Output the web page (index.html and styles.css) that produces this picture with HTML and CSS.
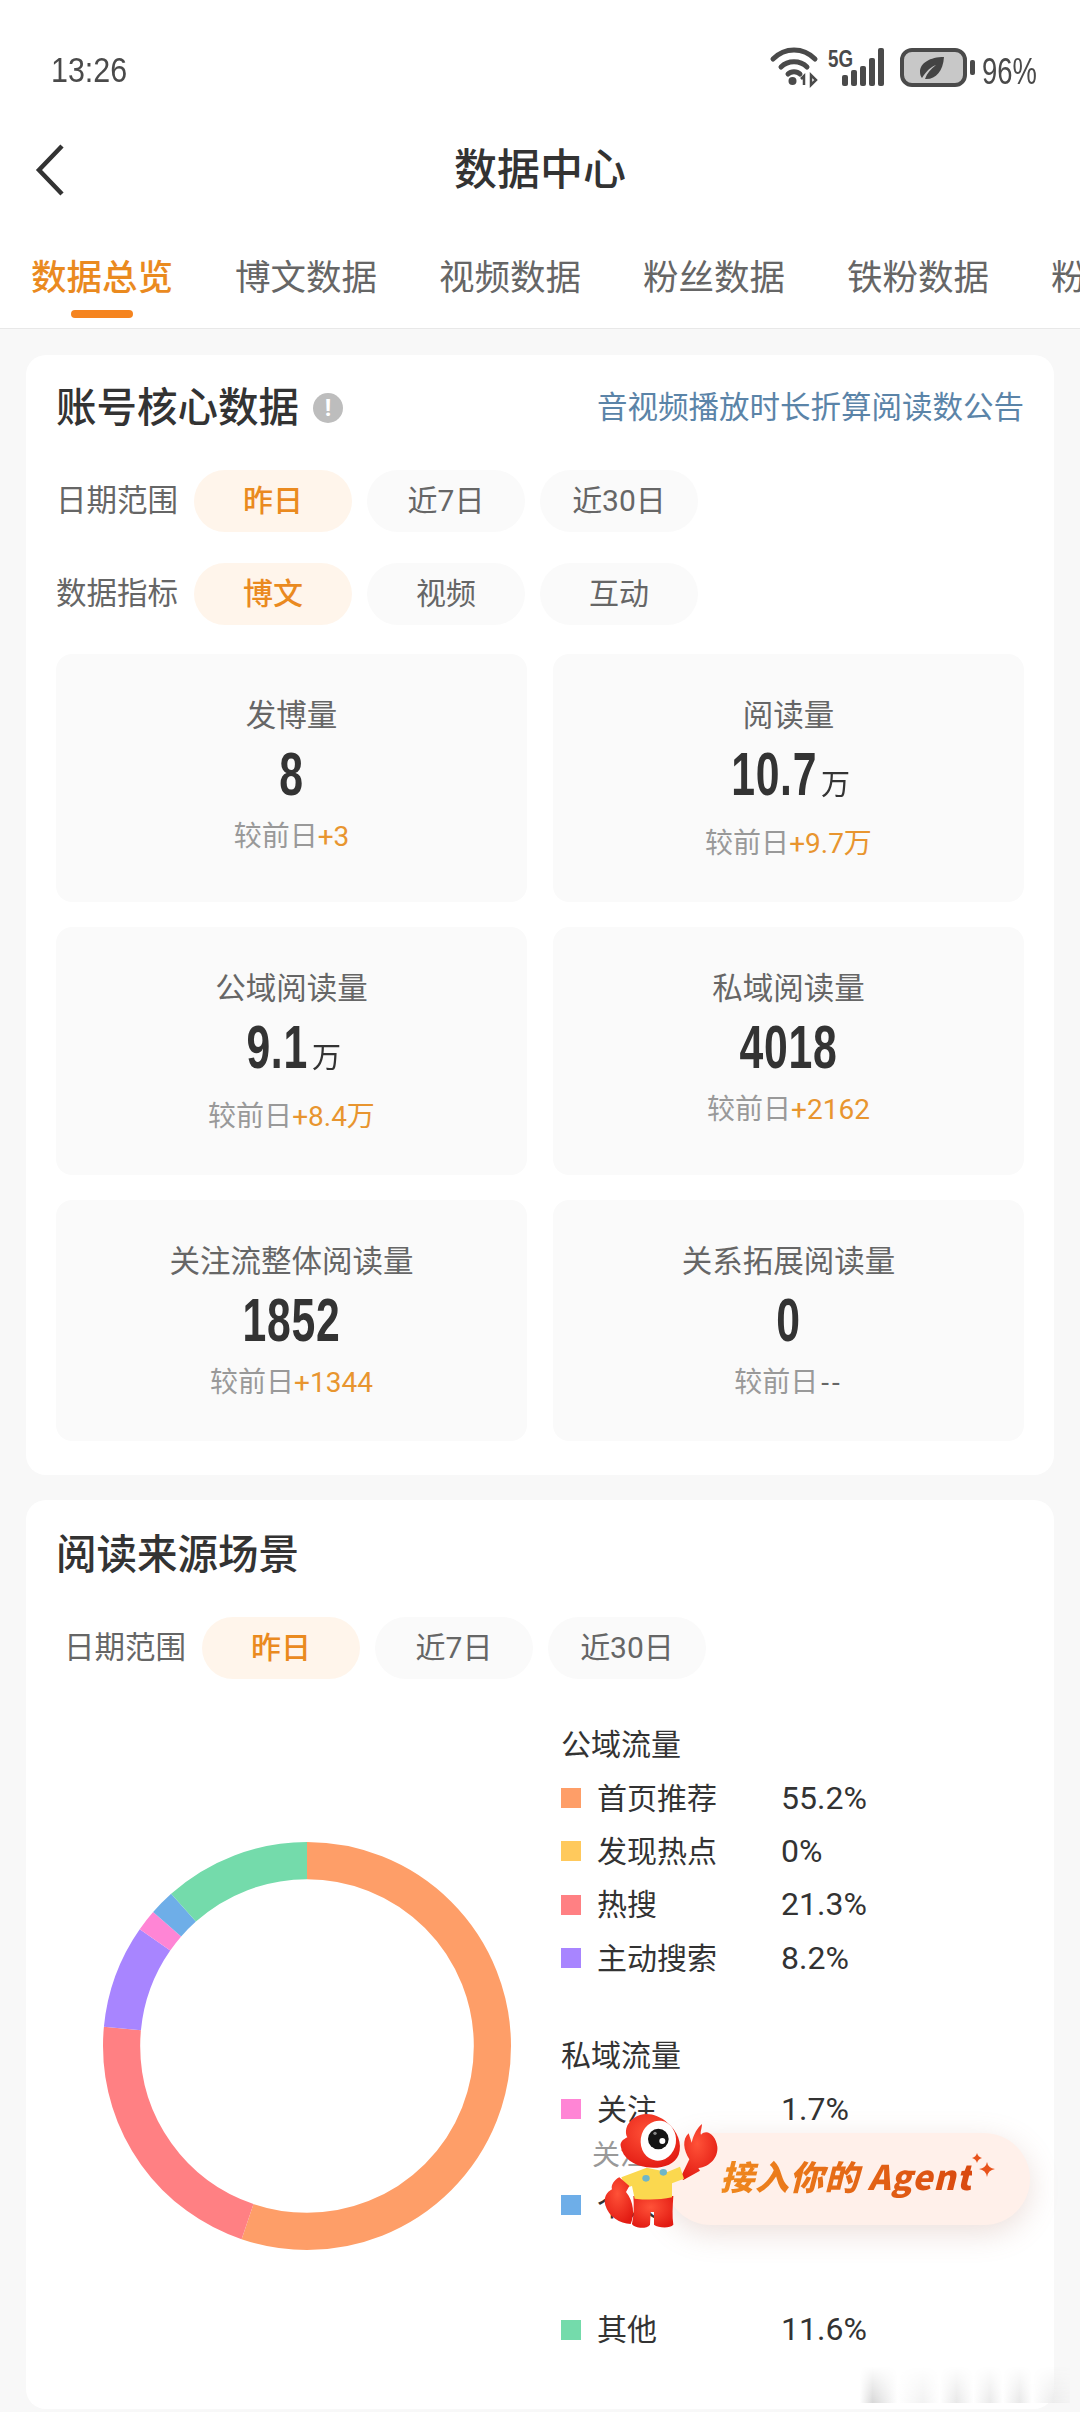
FILE: index.html
```html
<!DOCTYPE html>
<html lang="zh-CN">
<head>
    <meta charset="UTF-8">
    <meta name="viewport" content="width=device-width, initial-scale=1.0">
    <title>数据中心</title>
    <link rel="stylesheet" href="styles.css">
</head>
<body>
<div class="page">
    <div class="status-bar">
        <span class="status-time">13:26</span>
        <div class="status-right">
            <svg class="status-icons" width="206" height="40" viewBox="0 0 206 40">
                <!-- wifi -->
                <g fill="none" stroke="#4a4a4a" stroke-width="5" stroke-linecap="round">
                    <path d="M3 11 C15 -1 33 -1 45 11"/>
                    <path d="M11 19 C18 12 30 12 37 19"/>
                    <path d="M18 26 C21 23 27 23 30 26"/>
                </g>
                <circle cx="22.500" cy="33" r="4" fill="#4a4a4a"/>
                <path d="M34 37 L34 28 L31 31 M41 27 L41 37 L46 32 Z" fill="none" stroke="#4a4a4a" stroke-width="2.500"/>
                <!-- 5G + signal -->
                <text x="58" y="19" class="status-5g" textLength="25" lengthAdjust="spacingAndGlyphs">5G</text>
                <g fill="#4a4a4a">
                    <rect x="72" y="27" width="6" height="11" rx="2"/>
                    <rect x="81" y="22" width="6" height="16" rx="2"/>
                    <rect x="90" y="18" width="6" height="20" rx="2"/>
                    <rect x="99" y="10" width="6" height="28" rx="2"/>
                    <rect x="108" y="0" width="6" height="38" rx="2"/>
                </g>
                <!-- battery -->
                <rect x="132" y="2" width="63" height="35" rx="10" fill="#c8c8c8" stroke="#4a4a4a" stroke-width="4"/>
                <rect x="200" y="12" width="5" height="15" rx="2" fill="#4a4a4a"/>
                <path d="M174 9 C160 9 150 15 150 24 C150 27 151 29 152 30 C157 22 161 19 166 17 C161 21 157 25 155 31 C165 32 173 24 174 9 Z" fill="#444"/>
            </svg>
            <span class="status-pct">96%</span>
        </div>
    </div>

    <div class="top-bar">
        <svg class="back-icon" width="30" height="52" viewBox="0 0 30 52">
            <path d="M27 2 L4 26 L27 50" fill="none" stroke="#333" stroke-width="4.500"/>
        </svg>
        <h1 class="top-title">数据中心</h1>
    </div>

    <div class="tabs">
        <div class="tab tab-on">数据总览</div>
        <div class="tab">博文数据</div>
        <div class="tab">视频数据</div>
        <div class="tab">粉丝数据</div>
        <div class="tab">铁粉数据</div>
        <div class="tab">粉丝数据</div>
    </div>

    <section class="card card-core">
        <div class="card-head">
            <h2 class="card-title">账号核心数据</h2>
            <span class="info-dot">!</span>
            <a class="card-link">音视频播放时长折算阅读数公告</a>
        </div>
        <div class="filter">
            <span class="filter-label">日期范围</span>
            <span class="chip chip-on">昨日</span>
            <span class="chip">近7日</span>
            <span class="chip">近30日</span>
        </div>
        <div class="filter filter-second">
            <span class="filter-label">数据指标</span>
            <span class="chip chip-on">博文</span>
            <span class="chip">视频</span>
            <span class="chip">互动</span>
        </div>
        <div class="tiles">
            <div class="tile">
                <p class="tile-label">发博量</p>
                <p class="tile-num">8</p>
                <p class="tile-sub">较前日<span class="up">+3</span></p>
            </div>
            <div class="tile">
                <p class="tile-label">阅读量</p>
                <p class="tile-num has-unit">10.7<span class="unit">万</span></p>
                <p class="tile-sub">较前日<span class="up">+9.7万</span></p>
            </div>
            <div class="tile">
                <p class="tile-label">公域阅读量</p>
                <p class="tile-num has-unit">9.1<span class="unit">万</span></p>
                <p class="tile-sub">较前日<span class="up">+8.4万</span></p>
            </div>
            <div class="tile">
                <p class="tile-label">私域阅读量</p>
                <p class="tile-num">4018</p>
                <p class="tile-sub">较前日<span class="up">+2162</span></p>
            </div>
            <div class="tile">
                <p class="tile-label">关注流整体阅读量</p>
                <p class="tile-num">1852</p>
                <p class="tile-sub">较前日<span class="up">+1344</span></p>
            </div>
            <div class="tile">
                <p class="tile-label">关系拓展阅读量</p>
                <p class="tile-num">0</p>
                <p class="tile-sub">较前日<span class="none">--</span></p>
            </div>
        </div>
    </section>

    <section class="card card-source">
        <div class="card-head">
            <h2 class="card-title">阅读来源场景</h2>
        </div>
        <div class="filter filter-inset">
            <span class="filter-label">日期范围</span>
            <span class="chip chip-on">昨日</span>
            <span class="chip">近7日</span>
            <span class="chip">近30日</span>
        </div>
        <div class="source-body">
            <svg class="donut" width="408" height="408" viewBox="0 0 406 406">
                <g fill="none" stroke-width="37" transform="rotate(-90 203 203)">
                    <circle cx="203" cy="203" r="184.500" pathLength="100" stroke="#fe9e68" stroke-dasharray="55.200 44.800"/>
                    <circle cx="203" cy="203" r="184.500" pathLength="100" stroke="#ff8083" stroke-dasharray="21.300 78.700" stroke-dashoffset="-55.200"/>
                    <circle cx="203" cy="203" r="184.500" pathLength="100" stroke="#a885ff" stroke-dasharray="8.200 91.800" stroke-dashoffset="-76.500"/>
                    <circle cx="203" cy="203" r="184.500" pathLength="100" stroke="#ff85d5" stroke-dasharray="1.700 98.300" stroke-dashoffset="-84.700"/>
                    <circle cx="203" cy="203" r="184.500" pathLength="100" stroke="#6eaee8" stroke-dasharray="2 98" stroke-dashoffset="-86.400"/>
                    <circle cx="203" cy="203" r="184.500" pathLength="100" stroke="#74dbab" stroke-dasharray="11.600 88.400" stroke-dashoffset="-88.400"/>
                </g>
            </svg>
            <div class="legend">
                <div class="legend-head">公域流量</div>
                <div class="legend-row"><i class="swatch sw-orange"></i><span class="legend-name">首页推荐</span><span class="legend-val">55.2%</span></div>
                <div class="legend-row"><i class="swatch sw-yellow"></i><span class="legend-name">发现热点</span><span class="legend-val">0%</span></div>
                <div class="legend-row"><i class="swatch sw-red"></i><span class="legend-name">热搜</span><span class="legend-val">21.3%</span></div>
                <div class="legend-row"><i class="swatch sw-purple"></i><span class="legend-name">主动搜索</span><span class="legend-val">8.2%</span></div>

                <div class="legend-head legend-head-second">私域流量</div>
                <div class="legend-row"><i class="swatch sw-pink"></i><span class="legend-name">关注</span><span class="legend-val">1.7%</span></div>
                <div class="legend-note">关注</div>
                <div class="legend-row legend-row-gap"><i class="swatch sw-blue"></i><span class="legend-name">个人</span></div>
                <div class="legend-row"><i class="swatch sw-green"></i><span class="legend-name">其他</span><span class="legend-val">11.6%</span></div>
            </div>
        </div>
    </section>

    <div class="watermark"></div>

    <div class="agent">
        <span class="agent-text">接入你的 Agent</span>
        <svg class="agent-spark" width="26" height="36" viewBox="0 0 26 36">
            <path d="M6 0 Q7 4 11 5 Q7 6 6 10 Q5 6 1 5 Q5 4 6 0 Z" fill="#e8531c"/>
            <path d="M16 9 Q17 15 24 16 Q17 17 16 24 Q15 17 8 16 Q15 15 16 9 Z" fill="#e8531c"/>
        </svg>
        <svg class="agent-crab" width="140" height="140" viewBox="0 0 420 420">
            <defs>
                <radialGradient id="crabRed" cx="45%" cy="35%" r="70%">
                    <stop offset="0" stop-color="#ff5238"/>
                    <stop offset="1" stop-color="#e21a12"/>
                </radialGradient>
            </defs>
            <!-- raised claw -->
            <path d="M272 232 L298 178 C280 150 276 118 296 100 L305 128 C312 100 322 84 336 72 C335 88 330 98 333 104 C352 84 378 108 382 140 C385 172 360 200 325 204 L330 212 L280 240 Z" fill="url(#crabRed)"/>
            <!-- legs -->
            <path d="M130 288 L250 288 C248 320 246 350 250 374 C240 386 205 384 192 374 L192 336 L182 336 L180 374 C170 388 135 386 126 372 C132 345 132 315 130 288 Z" fill="url(#crabRed)"/>
            <!-- shirt -->
            <path d="M94 232 L170 203 L232 216 L270 200 L282 236 L246 250 L246 292 C210 300 170 300 134 296 L126 258 L106 264 Z" fill="#fbd84f"/>
            <ellipse cx="168" cy="235" rx="11" ry="10" fill="#6fb6c8"/>
            <ellipse cx="220" cy="217" rx="11" ry="10" fill="#6fb6c8"/>
            <!-- low claw -->
            <path d="M88 232 L118 258 L108 276 C132 305 134 345 122 372 C90 372 56 350 46 316 C40 292 50 276 66 268 C62 256 72 240 88 232 Z" fill="url(#crabRed)"/>
            <!-- head -->
            <path d="M132 54 C160 34 200 40 232 68 C262 92 278 130 266 164 C254 196 210 208 170 202 C132 196 98 176 92 138 C90 126 100 118 112 112 C104 98 106 72 132 54 Z" fill="url(#crabRed)"/>
            <ellipse cx="205" cy="122" rx="53" ry="60" fill="#fff" transform="rotate(8 205 122)"/>
            <circle cx="205" cy="117" r="31" fill="#151515"/>
            <circle cx="217" cy="123" r="9" fill="#fff"/>
            <circle cx="195" cy="100" r="5" fill="#888"/>
        </svg>
    </div>
</div>
</body>
</html>
```

FILE: styles.css
```css
* {
    box-sizing: border-box;
}
body {
    margin: 0;
    background-color: #f8f8f8;
    font-family: Roboto, "Noto Sans CJK SC", sans-serif;
    color: #333;
}
p, h1, h2 {
    margin: 0;
    font-weight: normal;
}
.page {
    position: relative;
    width: 1080px;
    height: 2412px;
    overflow: hidden;
}

/* status bar */
.status-bar {
    height: 110px;
    background-color: #fff;
    display: flex;
    justify-content: space-between;
    padding: 48px 44px 0 51px;
    color: #4a4a4a;
}
.status-time {
    display: inline-block;
    height: 44px;
    font-family: "Liberation Sans", sans-serif;
    font-size: 35px;
    line-height: 44px;
    transform: scaleX(0.87);
    transform-origin: left center;
}
.status-right {
    display: flex;
    align-items: flex-start;
}
.status-icons {
    overflow: visible;
}
.status-5g {
    font-family: "Liberation Sans", sans-serif;
    font-size: 24px;
    font-weight: bold;
    fill: #4a4a4a;
}
.status-pct {
    display: inline-block;
    width: 54px;
    height: 44px;
    margin-left: 6px;
    font-family: "Liberation Sans", sans-serif;
    font-size: 37px;
    line-height: 48px;
    white-space: nowrap;
    transform: scaleX(0.74);
    transform-origin: left center;
}

/* header */
.top-bar {
    position: relative;
    height: 120px;
    background-color: #fff;
    display: flex;
    align-items: center;
    justify-content: center;
}
.back-icon {
    position: absolute;
    left: 35px;
    top: 34px;
}
.top-title {
    font-size: 43px;
    font-weight: 500;
    line-height: 56px;
    color: #333;
}

/* tabs */
.tabs {
    height: 99px;
    background-color: #fff;
    border-bottom: 1px solid #e8e8e8;
    display: flex;
    gap: 62px;
    padding-left: 31px;
    overflow: hidden;
}
.tab {
    position: relative;
    flex-shrink: 0;
    font-size: 35.500px;
    line-height: 50px;
    padding-top: 23px;
    color: #666;
}
.tab-on {
    color: #ea8a1f;
    font-weight: 500;
}
.tab-on::after {
    content: "";
    position: absolute;
    left: 40px;
    top: 80px;
    width: 62px;
    height: 8px;
    border-radius: 4px;
    background-color: #f5841f;
}

/* cards */
.card {
    margin: 26px 26px 0;
    padding: 22px 30px 34px;
    background-color: #fff;
    border-radius: 20px;
}
.card-head {
    height: 62px;
    display: flex;
    align-items: center;
    margin-bottom: 31px;
}
.card-title {
    font-size: 40.500px;
    font-weight: 500;
    line-height: 56px;
    color: #333;
}
.info-dot {
    width: 30px;
    height: 30px;
    margin-left: 14px;
    border-radius: 50%;
    background-color: #bdbdbd;
    color: #fff;
    font-size: 24px;
    font-weight: bold;
    line-height: 30px;
    text-align: center;
}
.card-link {
    margin-left: auto;
    font-size: 30.500px;
    line-height: 44px;
    color: #5b84a8;
}

/* filters */
.filter {
    display: flex;
    align-items: center;
    gap: 15px;
    height: 62px;
}
.filter-second {
    margin-top: 31px;
}
.filter-inset {
    margin-top: 1px;
    padding-left: 8px;
}
.filter-label {
    width: 123px;
    font-size: 30.500px;
    line-height: 40px;
    color: #666;
    white-space: nowrap;
}
.chip {
    width: 158px;
    height: 62px;
    border-radius: 31px;
    background-color: #fafafa;
    color: #666;
    font-size: 30px;
    line-height: 62px;
    text-align: center;
}
.chip-on {
    background-color: #fff5eb;
    color: #ea8a1f;
    font-weight: 500;
}

/* number tiles */
.tiles {
    display: grid;
    grid-template-columns: 1fr 1fr;
    gap: 25px 26px;
    margin-top: 29px;
}
.tile {
    padding: 42px 0 36px;
    border-radius: 16px;
    background-color: #fafafa;
    text-align: center;
}
.tile-label {
    height: 40px;
    font-size: 30.500px;
    line-height: 40px;
    color: #666;
}
.tile-num {
    height: 80px;
    margin-top: -2px;
    font-family: "Liberation Sans", sans-serif;
    font-size: 61px;
    line-height: 80px;
    font-weight: bold;
    letter-spacing: 1px;
    color: #333;
    transform: scaleX(0.7);
}
.has-unit {
    margin-bottom: 8px;
}
.unit {
    display: inline-block;
    font-family: "Noto Sans CJK SC", sans-serif;
    font-size: 29px;
    line-height: 40px;
    font-weight: normal;
    letter-spacing: 0;
    margin-left: 12px;
    transform: scaleX(1.43);
}
.tile-sub {
    height: 44px;
    margin-top: 1px;
    font-size: 28px;
    line-height: 44px;
    color: #999;
}
.up {
    color: #e8952f;
}
.none {
    color: #666;
    letter-spacing: 3px;
    margin-left: 3px;
}

/* reading source */
.card-source {
    margin-top: 25px;
    padding-top: 24px;
    padding-bottom: 52px;
}
.source-body {
    display: flex;
    align-items: flex-start;
    margin-top: 39px;
}
.donut {
    flex-shrink: 0;
    margin: 124px 0 0 47px;
}
.legend {
    margin-left: 50px;
    font-size: 30px;
}
.legend-head,
.legend-row {
    height: 53.400px;
    line-height: 53px;
}
.legend-head-second {
    margin-top: 44px;
}
.legend-row {
    display: flex;
    align-items: center;
}
.legend-row-gap {
    margin-bottom: 71px;
}
.swatch {
    width: 20px;
    height: 20px;
    margin-right: 16px;
}
.sw-orange { background-color: #fe9e68; }
.sw-yellow { background-color: #ffc95c; }
.sw-red { background-color: #ff8083; }
.sw-purple { background-color: #a885ff; }
.sw-pink { background-color: #ff85d5; }
.sw-blue { background-color: #6eaee8; }
.sw-green { background-color: #74dbab; }
.legend-name {
    width: 184px;
}
.legend-val {
    font-size: 32px;
}
.legend-note {
    height: 43px;
    padding-left: 31px;
    font-size: 28px;
    line-height: 40px;
    color: #999;
}

/* blurred strip at the bottom edge */
.watermark {
    position: absolute;
    left: 860px;
    top: 2366px;
    width: 210px;
    height: 37px;
    background: linear-gradient(90deg, #fff 0, #d8d8d8 6%, #fff 18%, #f2f2f2 30%, #fff 38%, #e8e8e8 46%, #fff 54%, #eaeaea 62%, #fff 68%, #e8e8e8 76%, #fff 82%, #ececec 92%, #f4f4f4 100%);
    -webkit-mask-image: linear-gradient(180deg, transparent, #000);
    mask-image: linear-gradient(180deg, transparent, #000);
}

/* floating agent pill */
.agent {
    position: absolute;
    left: 665px;
    top: 2133px;
    width: 365px;
    height: 92px;
    display: flex;
    align-items: center;
    padding-left: 55px;
    border-radius: 46px;
    background-color: #fff0ea;
    box-shadow: 0 8px 30px rgba(170, 110, 90, 0.22);
}
.agent-text {
    font-family: "Noto Sans CJK SC", sans-serif;
    font-size: 34px;
    line-height: 44px;
    font-weight: 900;
    font-style: italic;
    letter-spacing: 0.800px;
    white-space: nowrap;
    background: linear-gradient(90deg, #f08a1e, #d9480f);
    -webkit-background-clip: text;
    background-clip: text;
    color: transparent;
    margin-top: -7px;
}
.agent-spark {
    flex-shrink: 0;
    margin: -16px 0 0 -1px;
}
.agent-crab {
    position: absolute;
    left: -75px;
    top: -33px;
}
```
